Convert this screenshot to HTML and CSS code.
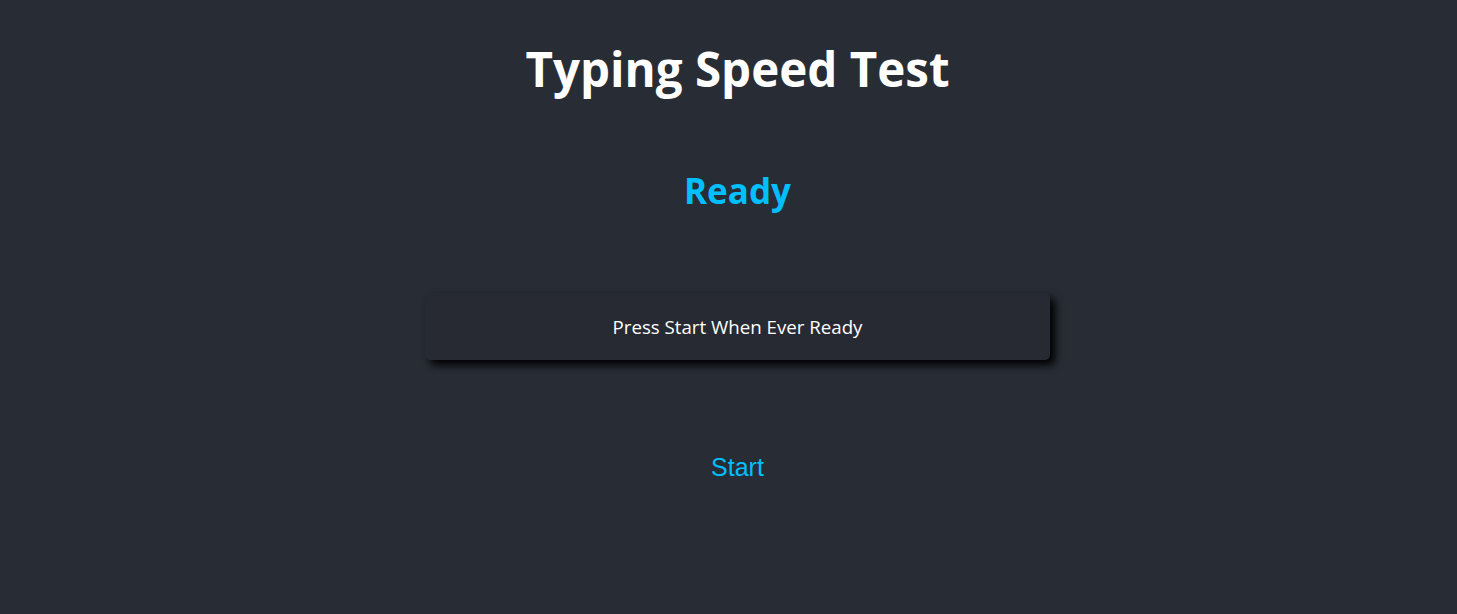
FILE: index.html
```html
<!DOCTYPE html>
<html>
<head>
<meta charset="utf-8">
<link rel="stylesheet" href="styles.css">
</head>
<body>
<div class="app">
  <h1 class="title">Typing Speed Test</h1>
  <h2 class="status">Ready</h2>
  <div class="prompt">Press Start When Ever Ready</div>
  <button class="start">Start</button>
</div>
</body>
</html>
```
FILE: styles.css
```css
html, body {
  margin: 0;
  padding: 0;
  background: #282c35;
  height: 100%;
}
.app {
  display: flex;
  flex-direction: column;
  align-items: center;
  padding-left: 18px;
  font-family: "Open Sans", "Noto Sans", sans-serif;
  color: #ffffff;
}
.title {
  margin: 37px 0 0;
  font-size: 47.5px;
  line-height: 64px;
  font-weight: 700;
}
.status {
  margin: 68px 0 0;
  font-size: 35px;
  line-height: 44px;
  font-weight: 700;
  color: #00bfff;
}
.prompt {
  margin-top: 80px;
  width: 625px;
  height: 67px;
  box-sizing: border-box;
  display: flex;
  align-items: center;
  justify-content: center;
  background: #272a33;
  border-radius: 5px;
  box-shadow: 5px 5px 9px rgba(0, 0, 0, 1);
  font-size: 18.7px;
}
.start {
  margin-top: 92px;
  background: none;
  border: none;
  padding: 0;
  font-family: "Liberation Sans", Arial, sans-serif;
  font-size: 25px;
  line-height: 30px;
  color: #00bfff;
  cursor: pointer;
}
```
